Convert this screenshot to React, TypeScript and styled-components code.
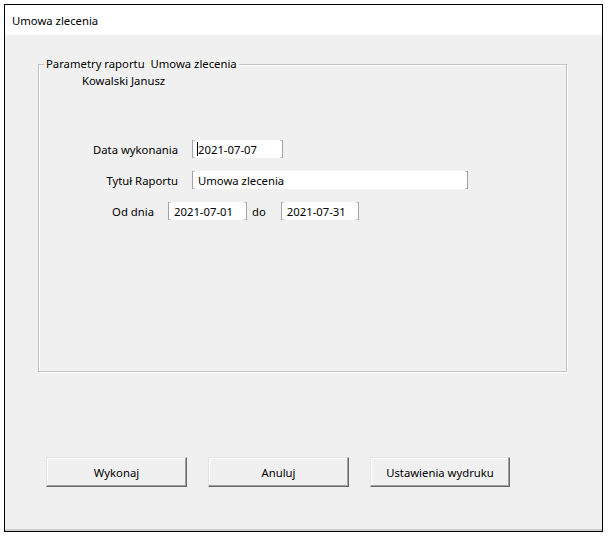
import React from 'react';
import styled, { createGlobalStyle } from 'styled-components';

const GlobalStyle = createGlobalStyle`
  html, body {
    margin: 0;
    padding: 0;
    background: #ffffff;
  }
  body {
    font-family: 'Noto Sans', 'Open Sans', Arial, sans-serif;
    font-size: 11.3px;
    color: #000;
  }
`;

const Page = styled.div`
  padding: 4px 0 0 4px;
`;

const Window = styled.div`
  width: 599px;
  height: 528px;
  box-sizing: border-box;
  border: 1px solid #000;
  display: flex;
  flex-direction: column;
  background: #f0f0f0;
`;

const TitleBar = styled.div`
  height: 30px;
  flex: none;
  background: #fff;
  display: flex;
  align-items: center;
  padding-left: 7px;
  box-sizing: border-box;
`;

const Body = styled.div`
  flex: 1;
  display: flex;
  flex-direction: column;
  padding: 21px 0 0 33px;
  border-bottom: 2px solid #cdcdcd;
  box-sizing: border-box;
`;

const Group = styled.fieldset`
  margin: 0;
  padding: 0;
  width: 529px;
  height: 316px;
  box-sizing: border-box;
  border: 1px solid #c2c2c2;
  box-shadow: 1px 1px 0 #ffffff, inset 1px 1px 0 #ffffff;
  display: block;
`;

const Legend = styled.legend`
  margin-left: 5px;
  padding: 0 2px;
  line-height: 16px;
`;

const Person = styled.div`
  margin: 1px 0 0 43px;
  line-height: 16px;
`;

const Form = styled.div`
  display: flex;
  flex-direction: column;
  gap: 13px;
  margin-top: 51px;
`;

const Row = styled.div`
  display: flex;
  align-items: center;
  height: 18px;
`;

const Label = styled.span<{ $w: number }>`
  width: ${({ $w }) => $w}px;
  text-align: right;
  margin-right: 14px;
  white-space: nowrap;
`;

const Field = styled.span<{ $w: number }>`
  position: relative;
  width: ${({ $w }) => $w}px;
  height: 18px;
  box-sizing: border-box;
  background: #fff;
  border-left: 1px solid #a3a3a3;
  border-right: 1px solid #a3a3a3;
  padding-left: 5px;
  display: flex;
  align-items: center;
  white-space: nowrap;

  &::before,
  &::after {
    content: '';
    position: absolute;
    top: 0;
    bottom: 0;
    width: 2px;
    border-top: 1px solid #a3a3a3;
    border-bottom: 1px solid #a3a3a3;
    box-sizing: border-box;
    opacity: 0.6;
  }
  &::before {
    left: 0;
  }
  &::after {
    right: 0;
  }
`;

const Caret = styled.span`
  display: inline-block;
  width: 1px;
  height: 14px;
  background: #000;
  margin-left: -1px;
`;

const Joiner = styled.span`
  margin: 0 15px 0 5px;
`;

const Buttons = styled.div`
  display: flex;
  gap: 21px;
  margin: 85px 0 0 8px;
`;

const Button = styled.button<{ $w: number }>`
  width: ${({ $w }) => $w}px;
  height: 30px;
  box-sizing: border-box;
  font-family: inherit;
  font-size: 11.3px;
  color: #000;
  background: #f0f0f0;
  border: 1px solid;
  border-color: #e3e3e3 #696969 #696969 #e3e3e3;
  box-shadow: inset -1px -1px 0 #a0a0a0, inset 1px 1px 0 #ffffff;
  padding: 0;
`;

export default function App() {
  return (
    <Page>
      <GlobalStyle />
      <Window>
        <TitleBar>Umowa zlecenia</TitleBar>
        <Body>
          <Group>
            <Legend>Parametry raportu&nbsp; Umowa zlecenia</Legend>
            <Person>Kowalski Janusz</Person>
            <Form>
              <Row>
                <Label $w={139}>Data wykonania</Label>
                <Field $w={91}>
                  <Caret />
                  2021-07-07
                </Field>
              </Row>
              <Row>
                <Label $w={139}>Tytuł Raportu</Label>
                <Field $w={276}>Umowa zlecenia</Field>
              </Row>
              <Row>
                <Label $w={115}>Od dnia</Label>
                <Field $w={79}>2021-07-01</Field>
                <Joiner>do</Joiner>
                <Field $w={78}>2021-07-31</Field>
              </Row>
            </Form>
          </Group>
          <Buttons>
            <Button $w={141}>Wykonaj</Button>
            <Button $w={141}>Anuluj</Button>
            <Button $w={140}>Ustawienia wydruku</Button>
          </Buttons>
        </Body>
      </Window>
    </Page>
  );
}
